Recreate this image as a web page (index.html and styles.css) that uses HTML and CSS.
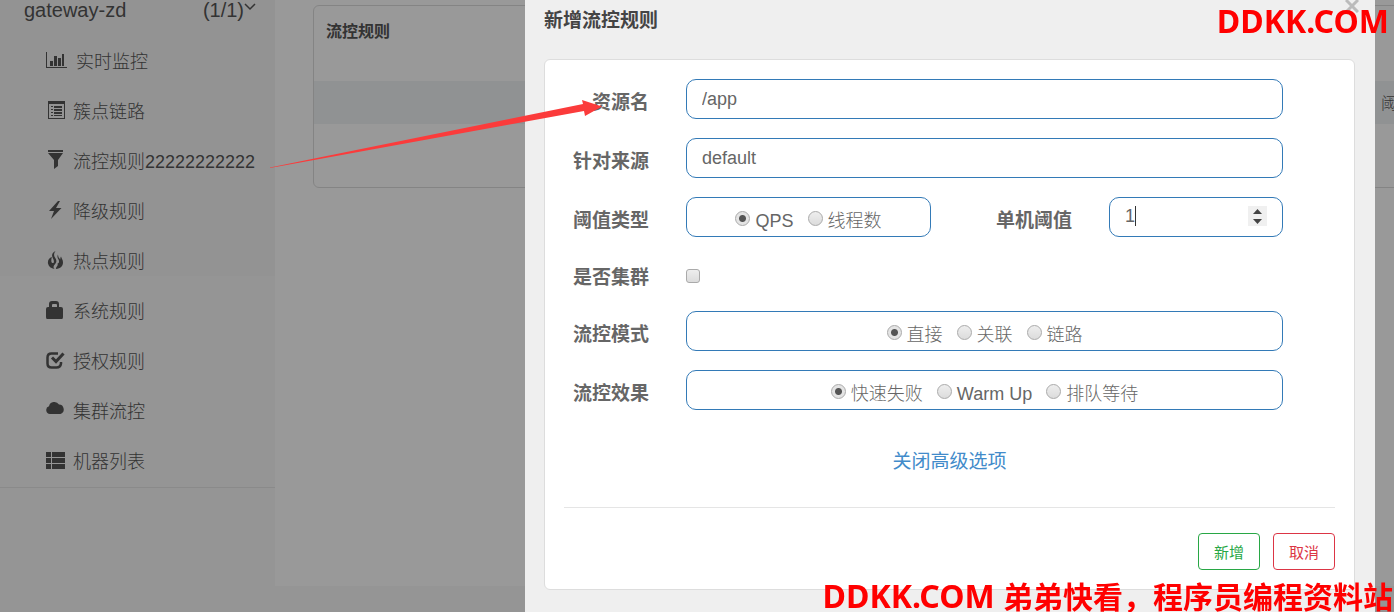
FILE: index.html
```
<!DOCTYPE html>
<html lang="zh-CN">
<head>
    <meta charset="UTF-8">
    <meta name="viewport" content="width=device-width, initial-scale=1.0">
    <title>新增流控规则</title>
    <link rel="stylesheet" href="styles.css">
</head>
<body>
    <div class="page">
        <nav class="sidebar">
            <a href="#" class="app-name">
                <span>gateway-zd</span>
                <span class="app-count">(1/1)<svg class="chevron" width="12" height="8" viewBox="0 0 12 8"><path d="M1 1l5 5 5-5" fill="none" stroke="currentColor" stroke-width="1.5"/></svg></span>
            </a>
            <ul class="menu">
                <li><a href="#"><svg class="icon icon-wide" viewBox="0 0 23 20"><path d="M0 2h1v15h20v1H0zM4 11h3v5H4zM8 6h3v10H8zM12 8h3v8h-3zM16 4h2v12h-2z"/></svg>实时监控</a></li>
                <li><a href="#"><svg class="icon" viewBox="0 0 20 20"><path fill-rule="evenodd" d="M2 1h17v18H2zM3 4v14h15V4zM5 6h2v1H5zM8 6h8v2H8zM5 9h2v1H5zM8 9h8v2H8zM5 12h2v1H5zM8 12h8v2H8zM5 15h2v1H5zM8 15h8v1H8z"/></svg>簇点链路</a></li>
                <li><a href="#"><svg class="icon" viewBox="0 0 20 20"><path d="M2 0h15v2H2zM2 3h15l-5 7v6l-4 3v-9z"/></svg>流控规则22222222222</a></li>
                <li><a href="#"><svg class="icon" viewBox="0 0 20 20"><path d="M12 1L3 11h5L5 19l10.500-11H10l4-7z"/></svg>降级规则</a></li>
                <li><a href="#"><svg class="icon" viewBox="0 0 20 20"><path d="M9.500 1C5.500 3 5.500 6 7 8.500c1.500 2.500 1 5-.500 4.500S5 9.500 6 7C3 8 1.500 10.500 2 13.500c.500 3 3 5 6.500 5.500-2-2-.500-3.500 1-5.500 1.500-2 1-4-.500-6C7.500 5.500 8 3 9.500 1zM12 4.500c-1 2-.500 3 .500 5s.500 4-1 4c1 2.500-2 3.500-1.500 5.500 4.500-.500 7-3 7-6.500 0-3-1.500-4-2-6-.500 1-1 2-.500 3-1.500-1-2.500-3-2.500-5z"/></svg>热点规则</a></li>
                <li><a href="#"><svg class="icon" viewBox="0 0 20 20"><path fill-rule="evenodd" d="M0 9q0-2 2-2h1V4q0-3 3-3h4q3 0 3 3v3h2q2 0 2 2v8q0 2-1 2H1q-1 0-1-2zM6 7h5V5q0-1-1-1H7Q6 4 6 5z"/></svg>系统规则</a></li>
                <li><a href="#"><svg class="icon" viewBox="0 0 20 20"><path d="M12 3.500H5.500q-4 0-4 4v6q0 4 4 4h5q4 0 4.500-4V12" fill="none" stroke="currentColor" stroke-width="2.500"/><path d="M6 7.500l4 4 7.500-8" fill="none" stroke="currentColor" stroke-width="3"/></svg>授权规则</a></li>
                <li><a href="#"><svg class="icon" viewBox="0 0 20 20"><path d="M4 14a4 4 0 0 1-1-7.800A5.500 5.500 0 0 1 13 4.500a4.900 4.900 0 0 1 1.500 9.500z"/></svg>集群流控</a></li>
                <li><a href="#"><svg class="icon" viewBox="0 0 20 20"><path d="M0 2h5v5H0zM6 2h13v5H6zM0 8h5v5H0zM6 8h13v5H6zM0 14h5v5H0zM6 14h13v5H6z"/></svg>机器列表</a></li>
            </ul>
        </nav>
        <main class="content">
            <section class="panel">
                <h2>流控规则</h2>
                <table class="rules">
                    <thead>
                        <tr><th>阈值</th></tr>
                    </thead>
                </table>
            </section>
        </main>
    </div>

    <div class="overlay">
        <div class="dialog" role="dialog" aria-labelledby="dialogTitle">
            <button type="button" class="close" aria-label="关闭"><svg width="14" height="14" viewBox="0 0 14 14"><path d="M1 1l12 12M13 1L1 13" stroke="currentColor" stroke-width="3"/></svg></button>
            <h1 id="dialogTitle">新增流控规则</h1>
            <form class="card">
                <div class="fields">
                    <label for="resource">资源名</label>
                    <input type="text" id="resource" class="box" value="/app">

                    <label for="limitApp">针对来源</label>
                    <input type="text" id="limitApp" class="box" value="default">

                    <span class="label">阈值类型</span>
                    <div class="split">
                        <div class="box options">
                            <label><input type="radio" name="grade" checked>QPS</label>
                            <label><input type="radio" name="grade">线程数</label>
                        </div>
                        <label for="count">单机阈值</label>
                        <div class="box number">
                            <input type="number" id="count" value="1">
                            <span class="caret"></span>
                            <span class="spinner">
                                <button type="button" aria-label="增加"><svg width="9" height="5" viewBox="0 0 9 5"><path d="M0 5L4.500 0 9 5z"/></svg></button>
                                <button type="button" aria-label="减少"><svg width="9" height="5" viewBox="0 0 9 5"><path d="M0 0l4.500 5L9 0z"/></svg></button>
                            </span>
                        </div>
                    </div>

                    <label for="cluster">是否集群</label>
                    <div class="check"><input type="checkbox" id="cluster"></div>

                    <span class="label">流控模式</span>
                    <div class="box options">
                        <label><input type="radio" name="strategy" checked>直接</label>
                        <label><input type="radio" name="strategy">关联</label>
                        <label><input type="radio" name="strategy">链路</label>
                    </div>

                    <span class="label">流控效果</span>
                    <div class="box options">
                        <label><input type="radio" name="behavior" checked>快速失败</label>
                        <label><input type="radio" name="behavior">Warm Up</label>
                        <label><input type="radio" name="behavior">排队等待</label>
                    </div>
                </div>
                <div class="advanced"><a href="#">关闭高级选项</a></div>
                <hr>
                <div class="actions">
                    <button type="button" class="btn btn-success">新增</button>
                    <button type="button" class="btn btn-danger">取消</button>
                </div>
            </form>
        </div>
    </div>

    <!-- Annotation arrow -->
    <svg class="arrow" width="332" height="70" viewBox="0 0 332 70"><path d="M0 68.500L313 5l-1-4 20 6.500L315 17l-1-5L0 69z"/></svg>

    <div class="mark mark-top">DDKK.COM</div>
    <div class="mark mark-bottom">DDKK.COM <span>弟弟快看，程序员编程资料站</span></div>
</body>
</html>
```
FILE: styles.css
```
* {
    box-sizing: border-box;
}

body {
    margin: 0;
    min-height: 100vh;
    overflow: hidden;
    background: #f8f8f8;
    color: #555;
    font-family: "Liberation Sans", "Noto Sans CJK SC", sans-serif;
    font-size: 18px;
    font-weight: 300;
}

input, button {
    font: inherit;
    color: inherit;
}

.page {
    display: flex;
    align-items: flex-start;
}

/* Sidebar */
.sidebar {
    flex: 0 0 275px;
    padding-bottom: 2px;
    border-bottom: 1px solid #e7e7e7;
    background: linear-gradient(#f5f5f5 276px, #f8f8f8 276px);
}

.sidebar a {
    display: flex;
    color: #555;
    text-decoration: none;
}

.sidebar .app-name {
    justify-content: space-between;
    height: 35px;
    padding: 0 19px 0 24px;
    font-size: 20px;
    line-height: 20px;
}

.app-count {
    display: flex;
}

.chevron {
    margin-top: 3px;
}

.menu {
    margin: 0;
    padding: 0;
    list-style: none;
}

.menu a {
    align-items: center;
    gap: 7px;
    height: 50px;
    padding: 0 0 1px 46px;
}

.icon {
    width: 20px;
    height: 20px;
    fill: currentColor;
}

.icon-wide {
    width: 23px;
}

/* Rule list */
.content {
    flex: 1;
    min-width: 0;
    min-height: calc(100vh - 26px);
    padding: 5px 0 0 38px;
    background: #fff;
}

.panel {
    margin-right: -30px;
    padding-bottom: 63px;
    border: 1px solid #ddd;
    border-radius: 6px;
}

.panel h2 {
    margin: 0;
    padding: 14px 12px 37px;
    font-size: 16px;
    line-height: 24px;
}

.rules {
    width: 100%;
    border-collapse: collapse;
    background: #f0f3f6;
}

.rules th {
    height: 43px;
    padding: 0 10px 2px 0;
    font-size: 16px;
    font-weight: 300;
    text-align: right;
}

/* Dialog */
.overlay {
    position: fixed;
    inset: 0;
    display: flex;
    justify-content: flex-end;
    padding-right: 19px;
    background: rgba(0, 0, 0, 0.4);
}

.dialog {
    position: relative;
    width: 850px;
    padding: 6px 20px 22px 19px;
    background: #efefef;
    color: #666;
}

.dialog h1 {
    margin: 0 0 23px;
    color: #444;
    font-size: 19px;
    font-weight: bold;
    line-height: 30px;
}

.close {
    position: absolute;
    top: -1px;
    right: 16px;
    display: flex;
    padding: 0;
    border: none;
    background: none;
    color: #bbb;
}

.card {
    padding: 19px;
    border: 1px solid #ddd;
    border-radius: 6px;
    background: #fff;
}

.fields {
    display: grid;
    grid-template-columns: 85px 1fr;
    gap: 19px 37px;
    padding-right: 52px;
}

.fields > label,
.fields > .label,
.split > label {
    align-self: center;
    padding-top: 8px;
    font-size: 19px;
    font-weight: bold;
    line-height: 28px;
    text-align: right;
}

.box {
    width: 100%;
    height: 40px;
    padding: 0 15px;
    border: 1px solid #337ab7;
    border-radius: 10px;
    background: #fff;
    outline: none;
}

.split {
    display: grid;
    grid-template-columns: 245px 1fr 174px;
    column-gap: 37px;
}

.options {
    display: flex;
    align-items: center;
    justify-content: center;
    gap: 14px;
    padding-top: 8px;
}

.options label {
    display: flex;
    align-items: center;
    gap: 5px;
    line-height: 26px;
}

input[type="radio"],
input[type="checkbox"] {
    appearance: none;
    width: 15px;
    height: 15px;
    margin: 0;
    border: 1px solid #aaa;
    background: linear-gradient(#eee, #dcdcdc);
}

input[type="radio"] {
    margin-bottom: 6px;
    border-radius: 50%;
}

input[type="radio"]:checked {
    background: radial-gradient(circle, #555 3px, #e4e4e4 4px);
}

input[type="checkbox"] {
    width: 14px;
    height: 14px;
    border-radius: 3px;
}

.check {
    display: flex;
    align-items: center;
    height: 36px;
    padding-top: 4px;
}

.number {
    position: relative;
    display: flex;
    align-items: center;
    justify-content: space-between;
    padding: 0 15px 2px;
}

.number input {
    width: 100px;
    padding: 0;
    border: none;
    outline: none;
    appearance: textfield;
}

.number input::-webkit-inner-spin-button {
    appearance: none;
}

.caret {
    position: absolute;
    top: 8px;
    left: 25px;
    width: 1px;
    height: 20px;
    background: #333;
}

.spinner {
    display: flex;
    flex-direction: column;
    width: 19px;
    height: 20px;
    background: #f0f0f0;
}

.spinner button {
    display: flex;
    flex: 1;
    align-items: center;
    justify-content: center;
    padding: 0;
    border: none;
    background: none;
    fill: #444;
}

.advanced {
    margin-top: 39px;
    font-size: 19px;
    font-weight: 400;
    line-height: 26px;
    text-align: center;
}

.advanced a {
    color: #428bca;
    text-decoration: none;
}

hr {
    margin: 32px 0 25px;
    border: none;
    border-top: 1px solid #e5e5e5;
}

.actions {
    display: flex;
    justify-content: flex-end;
    gap: 13px;
}

.btn {
    width: 62px;
    height: 37px;
    padding: 0;
    border: 1px solid;
    border-radius: 4px;
    background: #fff;
    font-size: 15px;
    font-weight: 400;
}

.btn-success {
    color: #28a745;
}

.btn-danger {
    color: #dc3545;
}

/* Marks over the page */
.arrow {
    position: absolute;
    top: 99px;
    left: 270px;
    fill: #fb3b3b;
}

.mark {
    position: absolute;
    color: #f00;
    font-family: "Noto Sans", "Noto Sans CJK SC", sans-serif;
    font-size: 32px;
    font-weight: bold;
    line-height: 30px;
    white-space: nowrap;
}

.mark-top {
    top: 6px;
    right: 5px;
}

.mark-bottom {
    right: 1px;
    bottom: 0;
}

.mark-bottom span {
    font-size: 30px;
}
```
